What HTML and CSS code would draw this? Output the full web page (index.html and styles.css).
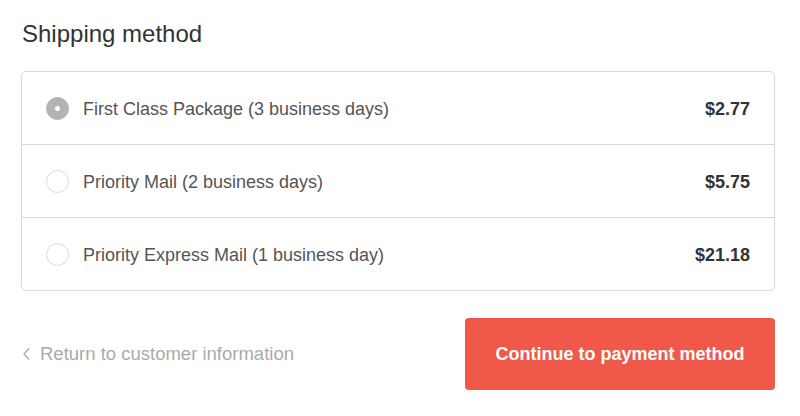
FILE: index.html
```html
<!DOCTYPE html>
<html>
<head lang="en">
  <meta charset="UTF-8">
  <title>Shipping method</title>
  <link rel="stylesheet" href="styles.css">
</head>
<body>
<div class="step">
  <h2 class="step-title">Shipping method</h2>
  <div class="rates">
    <label class="rate">
      <span class="radio checked"></span>
      <span class="rate-name">First Class Package (3 business days)</span>
      <span class="rate-price">$2.77</span>
    </label>
    <label class="rate">
      <span class="radio"></span>
      <span class="rate-name">Priority Mail (2 business days)</span>
      <span class="rate-price">$5.75</span>
    </label>
    <label class="rate">
      <span class="radio"></span>
      <span class="rate-name">Priority Express Mail (1 business day)</span>
      <span class="rate-price">$21.18</span>
    </label>
  </div>
  <div class="step-footer">
    <a class="back-link" href="javascript:void(0);">
      <svg class="chevron" width="9" height="14" viewBox="0 0 9 14"><path d="M7 1.5 L2 7 L7 12.5" fill="none" stroke="#aaa" stroke-width="1.4"/></svg>
      Return to customer information
    </a>
    <a class="continue-btn" href="javascript:void(0);">Continue to payment method</a>
  </div>
</div>
</body>
</html>
```

FILE: styles.css
```css
body {
  margin: 0;
  background: #ffffff;
  font-family: "Liberation Sans", Arial, sans-serif;
  color: #333333;
}

.step {
  padding: 20px 25px 0 21px;
}

.step-title {
  margin: 0 0 24px 1px;
  font-size: 24px;
  font-weight: normal;
  line-height: 27px;
  color: #333333;
}

.rates {
  border: 1px solid #d9d9d9;
  border-radius: 5px;
}

.rate {
  display: flex;
  align-items: center;
  height: 72px;
  padding: 0 24px 0 24px;
  border-top: 1px solid #d9d9d9;
}

.rate:first-child {
  border-top: none;
}

.radio {
  width: 21px;
  height: 21px;
  border: 1px solid #d9d9d9;
  border-radius: 50%;
  box-sizing: content-box;
  margin-right: 14px;
  position: relative;
}

.radio.checked {
  background: #b3b3b3;
  border-color: #b3b3b3;
}

.radio.checked:after {
  content: "";
  position: absolute;
  left: 8px;
  top: 8px;
  width: 5px;
  height: 5px;
  border-radius: 50%;
  background: #ffffff;
}

.rate-name {
  flex: 1;
  font-size: 18px;
  line-height: 24px;
  padding-top: 2px;
  color: #555555;
}

.rate-price {
  font-size: 18px;
  line-height: 24px;
  padding-top: 2px;
  font-weight: bold;
  color: #333333;
}

.step-footer {
  display: flex;
  justify-content: space-between;
  align-items: center;
  margin-top: 27px;
}

.back-link {
  display: flex;
  align-items: center;
  margin-left: 1px;
  font-size: 18.5px;
  color: #aaaaaa;
  text-decoration: none;
}

.chevron {
  margin-right: 9px;
}

.continue-btn {
  display: block;
  width: 310px;
  height: 72px;
  line-height: 72px;
  text-align: center;
  background: #f0594a;
  border-radius: 4px;
  color: #ffffff;
  font-size: 18px;
  font-weight: bold;
  text-decoration: none;
}
```
